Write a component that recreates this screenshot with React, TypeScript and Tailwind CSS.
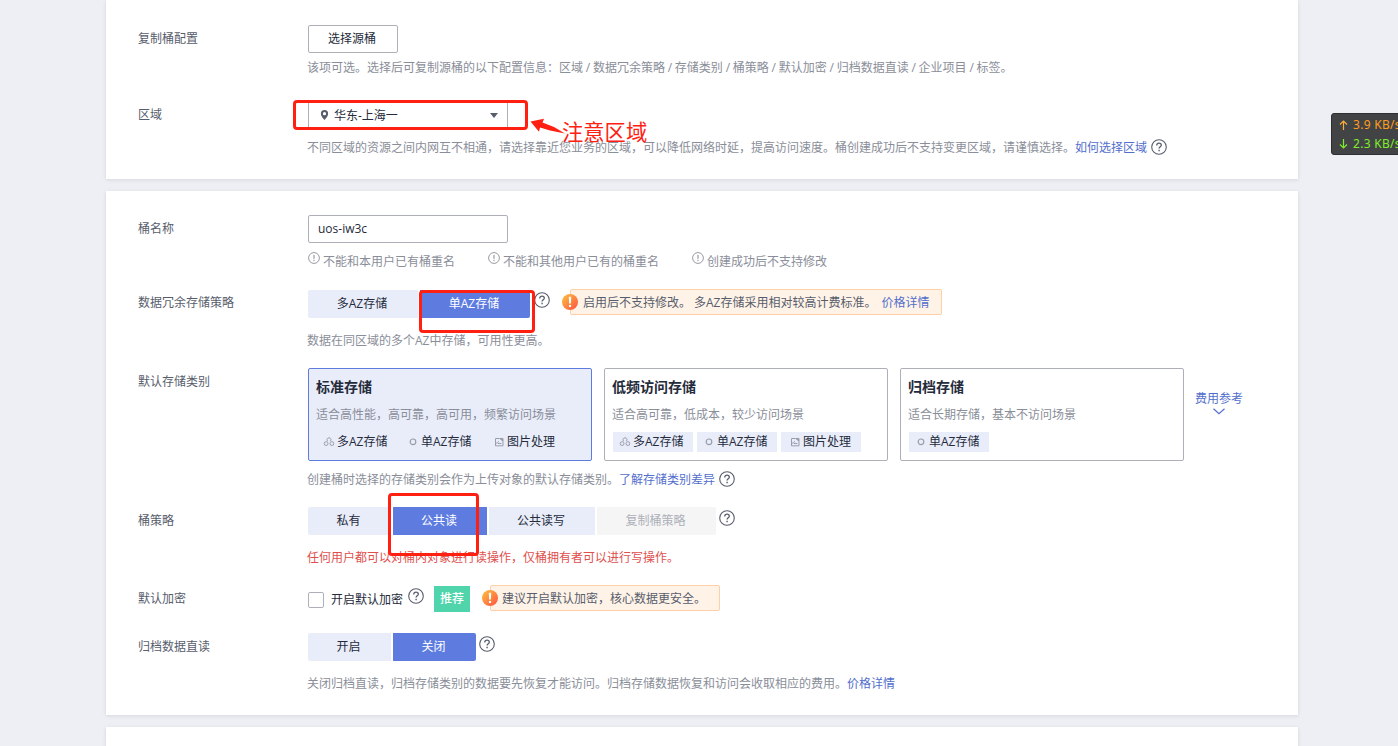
import React, { useState } from 'react';
import { clsx } from 'clsx';

const FONT = 'font-["Open_Sans","Noto_Sans_CJK_SC",sans-serif]';

type TagKind = 'multi' | 'single' | 'image';

const TAG_TEXT: Record<TagKind, string> = {
    multi: '多AZ存储',
    single: '单AZ存储',
    image: '图片处理',
};

const storageClasses: { title: string; desc: string; tags: TagKind[] }[] = [
    { title: '标准存储', desc: '适合高性能，高可靠，高可用，频繁访问场景', tags: ['multi', 'single', 'image'] },
    { title: '低频访问存储', desc: '适合高可靠，低成本，较少访问场景', tags: ['multi', 'single', 'image'] },
    { title: '归档存储', desc: '适合长期存储，基本不访问场景', tags: ['single'] },
];

function HelpIcon({ className }: { className?: string }) {
    return (
        <svg viewBox="0 0 16 16" className={clsx('h-4 w-4 shrink-0', className)} fill="none" stroke="#575d6c" strokeWidth="1.1">
            <circle cx="8" cy="8" r="7.3" />
            <path d="M5.7 6.4c0-1.4 1-2.2 2.3-2.2s2.3.8 2.3 2c0 1.6-2.2 1.7-2.2 3.4" strokeWidth="1.3" />
            <path d="M8.1 10.8v1.4" strokeWidth="1.4" />
        </svg>
    );
}

function InfoIcon() {
    return (
        <svg viewBox="0 0 12 12" className="h-3 w-3 shrink-0" fill="none" stroke="#8a8e99">
            <circle cx="6" cy="6" r="5.4" strokeWidth="0.9" />
            <path d="M6 3v3.8M6 7.8v1.2" strokeWidth="1.1" />
        </svg>
    );
}

function WarnIcon() {
    return (
        <svg viewBox="0 0 16 16" className="absolute top-1 -left-[9px] h-4 w-4">
            <defs>
                <linearGradient id="warn" x1="0" y1="0" x2="1" y2="1">
                    <stop offset="0" stopColor="#fdc33e" />
                    <stop offset="1" stopColor="#fc5043" />
                </linearGradient>
            </defs>
            <circle cx="8" cy="8" r="8" fill="url(#warn)" />
            <path d="M6.8 2.8h2.4l-.3 6.8H7.1z" fill="#fff" />
            <circle cx="8" cy="11.9" r="1.2" fill="#fff" />
        </svg>
    );
}

function TagIcon({ kind }: { kind: TagKind }) {
    return (
        <svg viewBox="0 0 12 12" className="h-3 w-3 shrink-0" fill="none" stroke="#9a9dab" strokeWidth="1">
            {kind === 'multi' && (
                <>
                    <path d="M4.6 5.2a2 2 0 1 1 2.800 0" />
                    <circle cx="3.100" cy="7.600" r="1.900" />
                    <circle cx="8.900" cy="7.600" r="1.900" />
                </>
            )}
            {kind === 'single' && <circle cx="6" cy="5.800" r="2.800" strokeWidth="1.200" />}
            {kind === 'image' && (
                <>
                    <path d="M6.500 2.500H2.500v7.300H10V6" />
                    <path d="M6.500 2.500H10V6M2.500 7h1.700L6 5.300M5 7.500h3.500" />
                    <path d="M7.500 3h2v2z" fill="#9a9dab" />
                </>
            )}
        </svg>
    );
}

function Row({ label, className, labelClass, children }: {
    label: string;
    className?: string;
    labelClass?: string;
    children: React.ReactNode;
}) {
    return (
        <div className={clsx('flex items-start', className)}>
            <div className={clsx('w-[170px] shrink-0 text-[#575d6c]', labelClass ?? 'leading-7')}>{label}</div>
            <div className="min-w-0 flex-1">{children}</div>
        </div>
    );
}

function Hint({ className, children }: { className?: string; children: React.ReactNode }) {
    return <div className={clsx('-ml-px flex h-5 items-center whitespace-nowrap leading-5 text-[#8a8e99]', className)}>{children}</div>;
}

function Link({ children, className }: { children: React.ReactNode; className?: string }) {
    return <a href="#" className={clsx('text-[#526ecc]', className)}>{children}</a>;
}

function Segmented({ options, value, onChange, disabled }: {
    options: { label: string; width: string }[];
    value: string;
    onChange: (v: string) => void;
    disabled?: string;
}) {
    return (
        <div className="flex h-7 gap-0.5 overflow-hidden rounded-xs">
            {options.map(({ label, width }) => (
                <button
                    key={label}
                    disabled={label === disabled}
                    onClick={() => onChange(label)}
                    className={clsx(
                        width,
                        'pr-0.5 pb-px leading-[26px] whitespace-nowrap',
                        label === disabled
                            ? 'bg-[#f5f5f6] text-[#adb0b8]'
                            : label === value ? 'bg-[#5e7ce0] text-white' : 'bg-[#e9edfa] text-[#252b3a]'
                    )}
                >
                    {label}
                </button>
            ))}
        </div>
    );
}

function Alert({ className, children }: { className?: string; children: React.ReactNode }) {
    return (
        <div className={clsx('relative flex h-[26px] items-center whitespace-nowrap rounded-xs border border-[#ffd0a6] bg-[#fff3e8] pt-0.5 text-[#575d6c]', className)}>
            <WarnIcon />
            {children}
        </div>
    );
}

export default function App() {
    const [redundancy, setRedundancy] = useState('单AZ存储');
    const [policy, setPolicy] = useState('公共读');
    const [directRead, setDirectRead] = useState('关闭');
    const [storage, setStorage] = useState(0);

    return (
        <div className={clsx('relative h-[746px] w-[1398px] overflow-hidden bg-[#eeeff5] text-xs', FONT)}>
            <div className="ml-[106px] flex w-[1192px] flex-col gap-3">
                <section className="h-[179px] bg-white pt-[25px] pl-8 shadow-[0_1px_4px_rgba(0,0,0,0.1)]">
                    <Row label="复制桶配置">
                        <button className="block h-7 w-[90px] rounded-xs border border-[#adb0b8] pr-0.5 leading-[26px] text-[#252b3a]">选择源桶</button>
                        <Hint className="mt-[5px] [word-spacing:-0.35px]">
                            该项可选。选择后可复制源桶的以下配置信息：区域 / 数据冗余策略 / 存储类别 / 桶策略 / 默认加密 / 归档数据直读 / 企业项目 / 标签。
                        </Hint>
                    </Row>
                    <Row label="区域" className="mt-[23px]">
                        <div className="flex h-7 w-[200px] items-center rounded-xs border border-[#adb0b8] pr-[9px] pl-[11px] text-[#252b3a]">
                            <svg viewBox="0 0 9 11" className="mr-[5px] h-[10px] w-[9px]" fill="#575d6c" fillRule="evenodd">
                                <path d="M4.500 0a4 4 0 0 1 4 4c0 2.600-2.600 5-4 7-1.400-2-4-4.400-4-7a4 4 0 0 1 4-4zm0 2.200a1.800 1.800 0 1 0 0 3.600 1.800 1.800 0 0 0 0-3.600z" />
                            </svg>
                            <span className="flex-1 pt-0.5">华东-上海一</span>
                            <svg viewBox="0 0 8 5" className="h-[5px] w-2" fill="#575d6c">
                                <path d="M0 0h8L4 5z" />
                            </svg>
                        </div>
                        <Hint className="mt-[9px]">
                            不同区域的资源之间内网互不相通，请选择靠近您业务的区域，可以降低网络时延，提高访问速度。桶创建成功后不支持变更区域，请谨慎选择。
                            <Link>如何选择区域</Link>
                            <HelpIcon className="-mt-0.5 ml-1" />
                        </Hint>
                    </Row>
                </section>

                <section className="h-[524px] bg-white pt-6 pl-8 shadow-[0_1px_4px_rgba(0,0,0,0.1)]">
                    <Row label="桶名称">
                        <input
                            defaultValue="uos-iw3c"
                            className="block h-7 w-[200px] rounded-xs border border-[#adb0b8] px-[9px] pb-0.5 text-[#252b3a] outline-none"
                        />
                        <Hint className="mt-[9px] ml-0">
                            <span className="flex w-[180px] items-start gap-[3px]"><InfoIcon />不能和本用户已有桶重名</span>
                            <span className="flex w-[204px] items-start gap-[3px]"><InfoIcon />不能和其他用户已有的桶重名</span>
                            <span className="flex items-start gap-[3px]"><InfoIcon />创建成功后不支持修改</span>
                        </Hint>
                    </Row>

                    <Row label="数据冗余存储策略" labelClass="leading-[26px]" className="mt-[18px]">
                        <div className="flex h-7 items-start">
                            <Segmented
                                options={[{ label: '多AZ存储', width: 'w-[110px]' }, { label: '单AZ存储', width: 'w-[110px]' }]}
                                value={redundancy}
                                onChange={setRedundancy}
                            />
                            <HelpIcon className="mt-0.5 ml-1" />
                            <Alert className="-mt-px ml-5 w-[372px] pl-3">
                                <span>启用后不支持修改。</span>
                                <span className="ml-[3px]">多AZ存储采用相对较高计费标准。</span>
                                <Link className="ml-[5px]">价格详情</Link>
                            </Alert>
                        </div>
                        <Hint className="mt-[13px]">数据在同区域的多个AZ中存储，可用性更高。</Hint>
                    </Row>

                    <Row label="默认存储类别" className="mt-[17px]">
                        <div className="flex gap-3">
                            {storageClasses.map((item, index) => (
                                <div
                                    key={item.title}
                                    onClick={() => setStorage(index)}
                                    className={clsx(
                                        'h-[93px] w-[284px] cursor-pointer rounded-xs border pt-2 pl-2',
                                        storage === index ? 'border-[#5e7ce0] bg-[#e9edfa]' : 'border-[#adb0b8] bg-white'
                                    )}
                                >
                                    <div className="-ml-px text-sm leading-5 font-bold text-[#252b3a]">{item.title}</div>
                                    <div className="mt-2 -ml-px leading-5 text-[#8a8e99]">{item.desc}</div>
                                    <div className="mt-[7px] flex gap-1">
                                        {item.tags.map(tag => (
                                            <span
                                                key={tag}
                                                className={clsx(
                                                    'flex h-5 w-20 items-center gap-0.5 bg-[#e9edfa] leading-5 whitespace-nowrap text-[#252b3a]',
                                                    tag === 'image' ? 'pl-2' : 'pl-1.5'
                                                )}
                                            >
                                                <TagIcon kind={tag} />
                                                {TAG_TEXT[tag]}
                                            </span>
                                        ))}
                                    </div>
                                </div>
                            ))}
                            <div className="-ml-px flex flex-col items-center pt-[21px] text-[#526ecc]">
                                <Link className="leading-5">费用参考</Link>
                                <svg viewBox="0 0 12 7" className="-mt-px h-[7px] w-3" fill="none" stroke="#526ecc" strokeWidth="1.200">
                                    <path d="M.5.800 6 5.700 11.500.800" />
                                </svg>
                            </div>
                        </div>
                        <Hint className="mt-[9px]">
                            创建桶时选择的存储类别会作为上传对象的默认存储类别。
                            <Link>了解存储类别差异</Link>
                            <HelpIcon className="-mt-0.5 ml-1" />
                        </Hint>
                    </Row>

                    <Row label="桶策略" className="mt-[17px]">
                        <div className="flex h-7 items-start">
                            <Segmented
                                options={[
                                    { label: '私有', width: 'w-[83px]' },
                                    { label: '公共读', width: 'w-[94px]' },
                                    { label: '公共读写', width: 'w-[106px]' },
                                    { label: '复制桶策略', width: 'w-[119px]' },
                                ]}
                                value={policy}
                                onChange={setPolicy}
                                disabled="复制桶策略"
                            />
                            <HelpIcon className="mt-[3px] ml-[3px]" />
                        </div>
                        <Hint className="mt-[13px] text-[#de504e]!">任何用户都可以对桶内对象进行读操作，仅桶拥有者可以进行写操作。</Hint>
                    </Row>

                    <Row label="默认加密" labelClass="leading-7" className="mt-[17px] h-[26px]">
                        <div className="flex h-[26px] items-start">
                            <span className="mt-[7px] h-4 w-4 rounded-xs border border-[#adb0b8] bg-white" />
                            <span className="ml-[7px] leading-[29px] text-[#252b3a]">开启默认加密</span>
                            <HelpIcon className="mt-[3px] ml-[5px]" />
                            <span className="mt-px ml-2.5 h-[26px] w-9 bg-[#50d4ab] text-center leading-[25px] font-medium text-white">推荐</span>
                            <Alert className="ml-5 w-[230px] pl-[11px]">建议开启默认加密，核心数据更安全。</Alert>
                        </div>
                    </Row>

                    <Row label="归档数据直读" className="mt-[22px]">
                        <div className="flex h-7 items-start">
                            <Segmented
                                options={[{ label: '开启', width: 'w-[83px]' }, { label: '关闭', width: 'w-[83px]' }]}
                                value={directRead}
                                onChange={setDirectRead}
                            />
                            <HelpIcon className="mt-[3px] ml-[3px]" />
                        </div>
                        <Hint className="mt-[13px]">
                            关闭归档直读，归档存储类别的数据要先恢复才能访问。归档存储数据恢复和访问会收取相应的费用。
                            <Link>价格详情</Link>
                        </Hint>
                    </Row>
                </section>

                <section className="h-[30px] bg-white shadow-[0_1px_4px_rgba(0,0,0,0.1)]" />
            </div>

            {/* Markup drawn over the form */}
            <div className="pointer-events-none absolute top-[100px] left-[293px] h-[30px] w-[235px] rounded-sm border-3 border-[#ff2012]" />
            <div className="pointer-events-none absolute top-[290px] left-[419px] h-[43px] w-[116px] rounded-sm border-3 border-[#ff2012]" />
            <div className="pointer-events-none absolute top-[493px] left-[388px] h-[63px] w-[91px] rounded-sm border-3 border-[#ff2012]" />
            <svg viewBox="0 0 36 16" className="pointer-events-none absolute top-[118px] left-[530px] h-4 w-9" fill="#ff2012">
                <path d="M.5 3.500 14 .8 12.500 4.500 24 9 35 15.500 20 12.500 10 9.500 9 13.800z" />
            </svg>
            <div className="pointer-events-none absolute top-[118px] left-[562px] text-[21.3px] leading-7 whitespace-nowrap text-[#ff2012]">注意区域</div>

            {/* Network speed widget */}
            <div className='absolute top-[113px] left-[1331px] flex h-[42px] w-[90px] flex-col justify-center rounded-[3px] border border-[#2e2f30] bg-[#424344] pl-[7px] font-["Noto_Sans",sans-serif] tracking-[0.3px] whitespace-nowrap'>
                <div className="flex h-[19px] items-center gap-[5px] text-[#ff9d1c]">
                    <svg viewBox="0 0 9 10" className="h-[10px] w-[9px]" fill="none" stroke="#f9ad3d" strokeWidth="1.200">
                        <path d="M4.500 10V1M1 4.500 4.500 1 8 4.500" />
                    </svg>
                    3.9 KB/s
                </div>
                <div className="flex h-[19px] items-center gap-[5px] text-[#7dee2b]">
                    <svg viewBox="0 0 9 10" className="h-[10px] w-[9px]" fill="none" stroke="#7dee2b" strokeWidth="1.200">
                        <path d="M4.500 0v9M1 5.500 4.500 9 8 5.500" />
                    </svg>
                    2.3 KB/s
                </div>
            </div>
        </div>
    );
}
